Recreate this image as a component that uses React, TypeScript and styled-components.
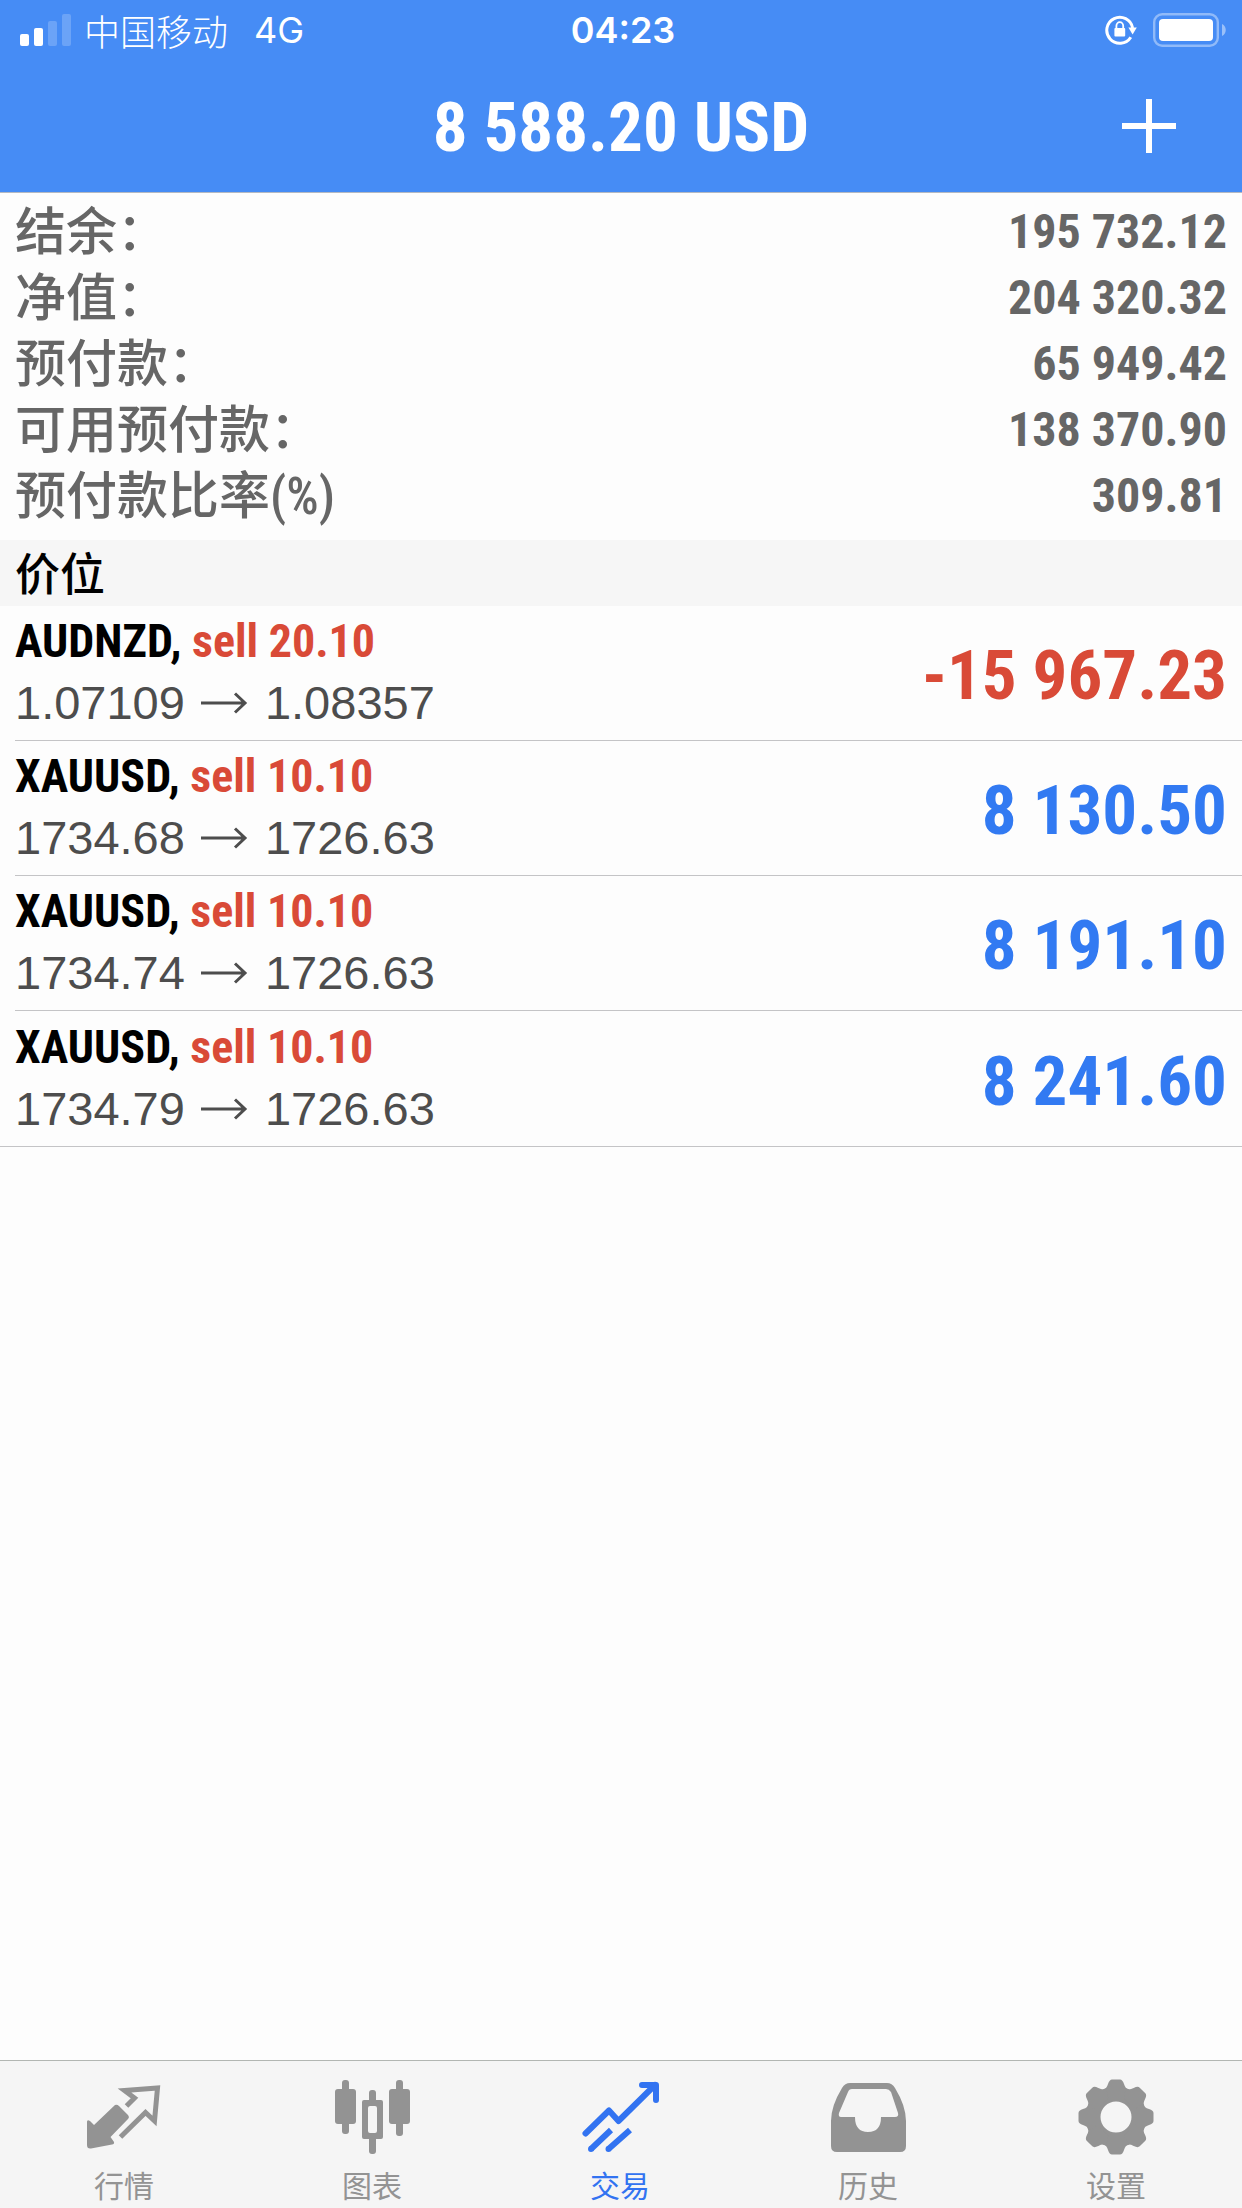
import React from "react";
import styled, { createGlobalStyle } from "styled-components";

const cjk = '"Noto Sans CJK SC", sans-serif';
const sans = `"Liberation Sans", ${cjk}`;
const condensed = `"Roboto Condensed", "Liberation Sans", ${cjk}`;
const system = `Inter, ${cjk}`;

const color = {
  header: "#468cf5",
  hairline: "#c4c4c6",
  label: "#666666",
  price: "#4d4d4d",
  loss: "#d94a37",
  profit: "#327af2",
  section: "#f6f6f6",
  tabBar: "#f5f5f5",
  tab: "#939393",
  tabActive: "#3273f1",
};

const GlobalStyle = createGlobalStyle`
  *, *::before, *::after { box-sizing: border-box; }
  body { margin: 0; background: #fdfdfd; font-family: ${sans}; }
  h1, h2, p, ul, dl, dd { margin: 0; padding: 0; }
  ul { list-style: none; }
`;

const Screen = styled.div`
  display: flex;
  flex-direction: column;
  min-height: 100vh;
`;

const Header = styled.header`
  background: ${color.header};
  color: #fff;
  border-bottom: 1px solid #b4b9c2;
`;

const StatusBar = styled.div`
  display: grid;
  grid-template-columns: 1fr auto 1fr;
  align-items: center;
  height: 60px;
  padding: 0 16px 0 20px;
  font: 400 36px/60px ${system};
`;

const StatusGroup = styled.div<{ $end?: boolean }>`
  display: flex;
  align-items: center;
  justify-content: ${(p) => (p.$end ? "flex-end" : "flex-start")};
  gap: ${(p) => (p.$end ? 16 : 12)}px;
`;

const Carrier = styled.span`
  font-family: ${cjk};
  font-weight: 300;
`;

const Network = styled.span`
  padding-left: 14px;
`;

const Clock = styled.time`
  font-weight: 600;
`;

const TitleBar = styled.div`
  display: grid;
  grid-template-columns: 1fr auto 1fr;
  align-items: center;
  height: 132px;
  padding: 0 48px;
`;

const Title = styled.h1`
  grid-column: 2;
  padding-top: 4px;
  font: 700 69px/72px ${condensed};
`;

const AddButton = styled.button`
  justify-self: end;
  display: grid;
  place-items: center;
  width: 90px;
  height: 90px;
  padding: 0;
  border: 0;
  background: none;
  color: inherit;
`;

const Summary = styled.dl`
  padding: 5px 15px 12px;
`;

const SummaryRow = styled.div`
  display: flex;
  align-items: center;
  justify-content: space-between;
  height: 66px;
  color: ${color.label};
`;

const SummaryLabel = styled.dt`
  padding-top: 4px;
  font: 500 51px/66px ${condensed};
`;

const SummaryValue = styled.dd`
  padding-top: 2px;
  font: 700 48px/66px ${condensed};
`;

const SectionTitle = styled.h2`
  padding: 6px 15px 0;
  background: ${color.section};
  color: #000;
  font: 500 45px/60px ${condensed};
`;

const Positions = styled.ul`
  padding-left: 15px;
  border-bottom: 1px solid ${color.hairline};
`;

const Position = styled.li`
  display: flex;
  align-items: center;
  justify-content: space-between;
  height: 135px;
  padding-right: 15px;

  &:not(:last-child) {
    border-bottom: 1px solid ${color.hairline};
  }
`;

const Deal = styled.p`
  font: 700 46px/62px ${condensed};
  color: #000;
`;

const Side = styled.span`
  color: ${color.loss};
`;

const Prices = styled.p`
  display: flex;
  align-items: center;
  gap: 12px;
  padding-bottom: 2px;
  font: 400 47px/62px ${sans};
  color: ${color.price};
`;

const Profit = styled.strong<{ $loss: boolean }>`
  padding-top: 6px;
  font: 700 69px/72px ${condensed};
  color: ${(p) => (p.$loss ? color.loss : color.profit)};
`;

const TabBar = styled.nav`
  display: grid;
  grid-template-columns: repeat(5, 1fr);
  margin-top: auto;
  padding-right: 2px;
  background: ${color.tabBar};
  border-top: 1px solid #b2b6b2;
`;

const Tab = styled.a<{ $active?: boolean }>`
  display: flex;
  flex-direction: column;
  align-items: center;
  gap: 4px;
  padding-top: 15px;
  height: 147px;
  font: 400 30px/48px ${cjk};
  color: ${(p) => (p.$active ? color.tabActive : color.tab)};
  text-decoration: none;
`;

const SignalIcon = () => (
  <svg width="52" height="32" viewBox="0 0 52 32" fill="#fff" aria-hidden="true">
    <rect x="0" y="20" width="9" height="12" rx="2" />
    <rect x="14" y="14" width="9" height="18" rx="2" />
    <rect x="28" y="7" width="9" height="25" rx="2" opacity=".2" />
    <rect x="42" y="0" width="9" height="32" rx="2" opacity=".2" />
  </svg>
);

const RotationLockIcon = () => (
  <svg width="32" height="32" viewBox="0 0 32 32" fill="none" aria-hidden="true">
    <path d="M25.8 23.2A13 13 0 1 1 27.6 14" stroke="#fff" strokeWidth="3" />
    <path d="M23.4 13.4h8.4l-4.2 7z" fill="#fff" />
    <path d="M11.4 15v-3a3.4 3.8 0 0 1 6.8 0v3" stroke="#fff" strokeWidth="1.8" />
    <rect x="9.4" y="14" width="10.8" height="8.6" rx="1" fill="#fff" />
  </svg>
);

const BatteryIcon = () => (
  <svg width="73" height="34" viewBox="0 0 73 34" fill="none" aria-hidden="true">
    <rect x="1.2" y="1.2" width="63.6" height="31.6" rx="8" stroke="#fff" strokeOpacity=".4" strokeWidth="2.4" />
    <rect x="6" y="6" width="54" height="22" rx="4" fill="#fff" />
    <path d="M69 11c5 2 5 10 0 12z" fill="#fff" fillOpacity=".45" />
  </svg>
);

const PlusIcon = () => (
  <svg width="54" height="54" viewBox="0 0 54 54" aria-hidden="true">
    <path d="M27 0v54M0 27h54" stroke="currentColor" strokeWidth="6" />
  </svg>
);

const ArrowIcon = () => (
  <svg width="56" height="24" viewBox="0 0 56 24" fill="none" stroke="currentColor" strokeWidth="3" role="img" aria-label="→">
    <path d="M4 12h44M38 2.500l10 9.500-10 9.500" />
  </svg>
);

const QuotesIcon = () => (
  <svg width="80" height="80" viewBox="0 0 80 80" fill="none" aria-hidden="true">
    <path
      d="M3 46Q3 43 6 45L10 49 31 29Q33 28 35 30L43.500 38.500Q46 41 44 43L26.500 61 30 66Q30.500 68 28 68.500L7 72.500Q3 73 3 69z"
      fill="currentColor"
    />
    <path
      d="M42.500 30 50.500 22 40.500 14.500 73.500 12 70.500 45 61.500 36.500 36.500 61"
      stroke="currentColor"
      strokeWidth="5"
    />
  </svg>
);

const ChartIcon = () => (
  <svg width="80" height="80" viewBox="0 0 80 80" fill="currentColor" aria-hidden="true">
    <rect x="10" y="4" width="7" height="54" rx="3" />
    <rect x="3" y="13" width="21" height="35" rx="3" />
    <rect x="64" y="4" width="7" height="56" rx="3" />
    <rect x="57" y="13" width="21" height="35" rx="3" />
    <rect x="37" y="14" width="7" height="16" rx="3" />
    <rect x="37" y="58" width="7" height="20" rx="3" />
    <path fillRule="evenodd" d="M32 24h17q2 0 2 2v35q0 2-2 2H32q-2 0-2-2V26q0-2 2-2zM38 30q-2 0-2 2v23q0 2 2 2h5q2 0 2-2V32q0-2-2-2z" />
  </svg>
);

const TradeIcon = () => (
  <svg width="80" height="80" viewBox="0 0 80 80" fill="none" stroke="currentColor" strokeLinecap="round" strokeLinejoin="round" aria-hidden="true">
    <path d="M5.500 57.500 29 34.500 38.500 45 75 9" strokeWidth="6" />
    <path d="M62 9h14v15" strokeWidth="6" />
    <path d="M11 73 31 54M28.500 73 50 54" strokeWidth="6" strokeLinecap="butt" />
    <path d="M11 73h0M28.500 73h0" strokeWidth="6" />
  </svg>
);

const HistoryIcon = () => (
  <svg width="80" height="80" viewBox="0 0 80 80" fill="currentColor" aria-hidden="true">
    <path
      fillRule="evenodd"
      d="M22 7H59Q64 7 67 12 78 30 78 45V70Q78 76 72 76H9Q3 76 3 70V45Q3 30 14 12 17 7 22 7zM24 13Q21 13 20 16L11 37Q10 41 13 41H27Q27 56 40 56T53 41H67Q71 41 70 37L63 16Q61 13 58 13z"
    />
  </svg>
);

// Eight rounded teeth, one every 45 degrees, around a ring.
const SettingsIcon = () => (
  <svg width="80" height="80" viewBox="0 0 80 80" aria-hidden="true">
    <circle cx="40" cy="41" r="23" fill="none" stroke="currentColor" strokeWidth="15" />
    {[0, 45, 90, 135, 180, 225, 270, 315].map((angle) => (
      <path
        key={angle}
        d="M27 14Q30.500 13 32 8 33.500 3.500 36 3.500H44Q46.500 3.500 48 8 49.500 13 53 14L48 22H32z"
        fill="currentColor"
        transform={`rotate(${angle} 40 41)`}
      />
    ))}
  </svg>
);

const summary = [
  { label: "结余：", value: "195 732.12" },
  { label: "净值：", value: "204 320.32" },
  { label: "预付款：", value: "65 949.42" },
  { label: "可用预付款：", value: "138 370.90" },
  { label: "预付款比率(%)", value: "309.81" },
];

const positions = [
  { symbol: "AUDNZD", side: "sell 20.10", open: "1.07109", current: "1.08357", profit: "-15 967.23" },
  { symbol: "XAUUSD", side: "sell 10.10", open: "1734.68", current: "1726.63", profit: "8 130.50" },
  { symbol: "XAUUSD", side: "sell 10.10", open: "1734.74", current: "1726.63", profit: "8 191.10" },
  { symbol: "XAUUSD", side: "sell 10.10", open: "1734.79", current: "1726.63", profit: "8 241.60" },
];

const tabs = [
  { id: "quotes", label: "行情", Icon: QuotesIcon },
  { id: "chart", label: "图表", Icon: ChartIcon },
  { id: "trade", label: "交易", Icon: TradeIcon },
  { id: "history", label: "历史", Icon: HistoryIcon },
  { id: "settings", label: "设置", Icon: SettingsIcon },
];

export default function App() {
  const active = "trade";
  return (
    <Screen>
      <GlobalStyle />
      <Header>
        <StatusBar>
          <StatusGroup>
            <SignalIcon />
            <Carrier>中国移动</Carrier>
            <Network>4G</Network>
          </StatusGroup>
          <Clock>04:23</Clock>
          <StatusGroup $end>
            <RotationLockIcon />
            <BatteryIcon />
          </StatusGroup>
        </StatusBar>
        <TitleBar>
          <Title>8 588.20 USD</Title>
          <AddButton type="button" aria-label="+">
            <PlusIcon />
          </AddButton>
        </TitleBar>
      </Header>
      <main>
        <Summary>
          {summary.map((row) => (
            <SummaryRow key={row.label}>
              <SummaryLabel>{row.label}</SummaryLabel>
              <SummaryValue>{row.value}</SummaryValue>
            </SummaryRow>
          ))}
        </Summary>
        <SectionTitle>价位</SectionTitle>
        <Positions>
          {positions.map((p) => (
            <Position key={p.open}>
              <div>
                <Deal>
                  {p.symbol}, <Side>{p.side}</Side>
                </Deal>
                <Prices>
                  <span>{p.open}</span>
                  <ArrowIcon />
                  <span>{p.current}</span>
                </Prices>
              </div>
              <Profit $loss={p.profit.startsWith("-")}>{p.profit}</Profit>
            </Position>
          ))}
        </Positions>
      </main>
      <TabBar>
        {tabs.map(({ id, label, Icon }) => (
          <Tab key={id} href={`#${id}`} $active={id === active} aria-current={id === active ? "page" : undefined}>
            <Icon />
            {label}
          </Tab>
        ))}
      </TabBar>
    </Screen>
  );
}
